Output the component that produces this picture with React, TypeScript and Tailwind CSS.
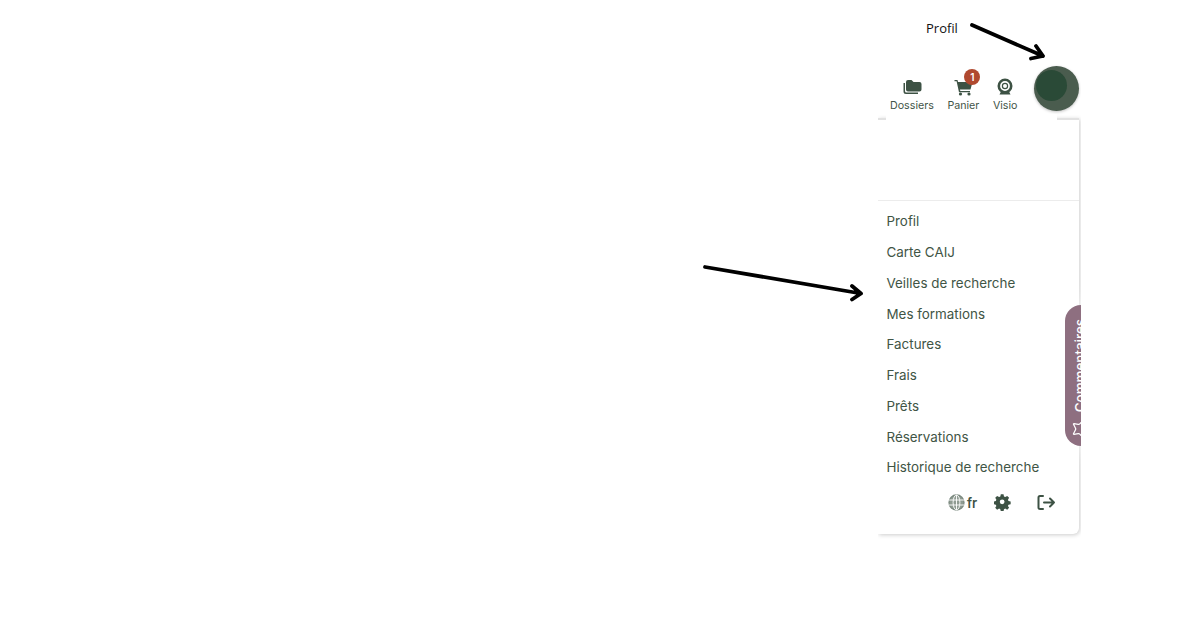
import { Star } from "lucide-react";

const items = ["Profil", "Carte CAIJ", "Veilles de recherche", "Mes formations", "Factures", "Frais", "Prêts", "Réservations", "Historique de recherche"];

function NavIcon({ label, children }: { label: string; children: React.ReactNode }) {
  return (
    <div className="flex flex-col items-center">
      <div className="relative flex h-[20px] w-[20px] items-center justify-center">{children}</div>
      <span className="mt-[2px] text-[10.7px] leading-[14px] text-[#435548]">{label}</span>
    </div>
  );
}

export default function App() {
  return (
    <div className="relative h-[630px] w-[1200px] overflow-hidden bg-white font-['Inter',sans-serif]">
      <span className="absolute left-[926px] top-[19px] font-['Open_Sans',sans-serif] text-[13px] leading-[18px] text-[#111]">Profil</span>
      <svg className="absolute left-0 top-0" width="1200" height="630" fill="none" stroke="#000" strokeWidth="3.8" strokeLinecap="round" strokeLinejoin="round">
        <path d="M972 25 L1043 56 M1036 46 L1043 56 L1031 58.5" />
        <path d="M705 267 L861 293.5 M852 286 L861 293.5 L852 299.5" />
      </svg>

      <div className="ml-[878px] w-[203px] overflow-hidden pt-[66px] pb-[10px]">
        <div className="flex h-[45px] w-[201px] items-start">
          <div className="ml-[12px] mt-[11px] flex items-start gap-[13.5px]">
            <NavIcon label="Dossiers">
              <svg className="ml-[1px]" width="19" height="16" viewBox="0 0 19 16" fill="#3d5244">
                <path d="M0.5 4 V12.5 a2.5 2.5 0 0 0 2.5 2.5 H15 V13.6 H3.5 a1.5 1.5 0 0 1-1.5-1.5 V4 Z" />
                <path d="M3 3 a2 2 0 0 1 2-2 h3.5 l2 2 H16.5 a2 2 0 0 1 2 2 v5.5 a2 2 0 0 1-2 2 H5 a2 2 0 0 1-2-2 Z" />
              </svg>
            </NavIcon>
            <NavIcon label="Panier">
              <svg className="ml-[1px]" width="19" height="17" viewBox="0 0 19 17" fill="#3d5244">
                <path d="M0.5 1 H3.5 L4 3 H18.5 L16.5 10.5 H6 L6.3 12 H16 V13.2 H5 L2.6 2.3 H0.5 Z" />
                <circle cx="6.5" cy="15" r="1.6" />
                <circle cx="15" cy="15" r="1.6" />
              </svg>
              <span className="absolute left-[11px] top-[-8px] flex h-[16px] w-[16px] items-center justify-center rounded-full bg-[#b0492f] text-[10px] font-semibold text-white">1</span>
            </NavIcon>
            <NavIcon label="Visio">
              <svg className="-ml-[1px]" width="16" height="18" viewBox="0 0 16 18" fill="none">
                <circle cx="8" cy="8" r="6.2" stroke="#3d5244" strokeWidth="2.6" />
                <circle cx="8" cy="8" r="2.6" stroke="#3d5244" strokeWidth="1.2" />
                <path d="M2.5 16.5 H13.5 L12 13.5 H4 Z" fill="#3d5244" />
              </svg>
            </NavIcon>
          </div>
          <div className="relative ml-auto h-[45px] w-[45px] overflow-hidden rounded-full bg-[#4a5c4e] shadow-[0_1px_3px_rgba(0,0,0,0.25)]">
            <div className="absolute left-[2px] top-[4px] h-[31px] w-[31px] rounded-full bg-[#2a4a37]" />
          </div>
        </div>

        <div className="relative mt-[7px] h-[416px] w-[201px] rounded-br-[6px] border-t-2 border-[#e2e2e2] bg-white shadow-[1px_1px_4px_rgba(0,0,0,0.2)]">
          <div className="absolute -top-[6px] left-[8px] h-[8px] w-[171px] bg-white" />
          <div className="h-[81px] border-b border-[#ececec]" />
          <ul className="pt-[5px]">
            {items.map((t) => (
              <li key={t} className="flex h-[30.75px] items-center pl-[8.5px] text-[13.4px] text-[#3f5545]">{t}</li>
            ))}
          </ul>
          <div className="absolute bottom-[23px] left-[70px] flex items-center text-[#3d5244]">
            <svg width="17" height="17" viewBox="0 0 17 17" fill="none" stroke="#7c8a80" strokeWidth="1.3">
              <circle cx="8.5" cy="8.5" r="7.5" fill="#8f9b92" />
              <ellipse cx="8.5" cy="8.5" rx="3.4" ry="7.5" stroke="#fff" strokeWidth="0.9" />
              <path d="M1 6 H16 M1 11 H16 M8.5 1 V16" stroke="#fff" strokeWidth="0.9" />
            </svg>
            <span className="ml-[2px] text-[13px] font-semibold leading-[16px]">fr</span>
            <svg className="ml-[17px]" width="17" height="17" viewBox="0 0 24 24" fill="#3d5244">
              <path fillRule="evenodd" d="M10 1 h4 l.7 3.2 1.8.8 2.9-1.7 2.8 2.8-1.7 2.9.8 1.8 3.2.7 v4 l-3.2.7-.8 1.8 1.7 2.9-2.8 2.8-2.9-1.7-1.8.8-.7 3.2 h-4 l-.7-3.2-1.8-.8-2.9 1.7-2.8-2.8 1.7-2.9-.8-1.8-3.2-.7 v-4 l3.2-.7.8-1.8-1.7-2.9 2.8-2.8 2.9 1.7 1.8-.8 Z M12 8.5 a3.5 3.5 0 1 0 0 7 a3.5 3.5 0 0 0 0-7 Z" transform="translate(0 -0.5) scale(0.96)" />
            </svg>
            <svg className="ml-[26px]" width="19" height="17" viewBox="0 0 19 17" fill="none" stroke="#3d5244" strokeWidth="2" strokeLinecap="round" strokeLinejoin="round">
              <path d="M6 2 H3 a1.5 1.5 0 0 0-1.5 1.5 V13.5 A1.5 1.5 0 0 0 3 15 H6" />
              <path d="M7 8.5 H17 M13 4.5 L17 8.5 L13 12.5" />
            </svg>
          </div>
          <div className="absolute left-[187px] top-[185px] h-[141px] w-[40px] rounded-l-[16px] bg-[#8e6f80] shadow-[0_0_24px_rgba(255,255,255,0.9)]">
            <div className="flex h-full w-[22px] flex-col-reverse items-center justify-start pb-[7px] pl-[3px]">
              <Star size={20} strokeWidth={1.5} className="ml-[6px] rotate-90 text-white" />
              <span className="mb-[7px] ml-[4px] text-[13.4px] font-medium leading-[18px] text-white [writing-mode:vertical-rl] rotate-180">Commentaires</span>
            </div>
          </div>
        </div>
      </div>
    </div>
  );
}
